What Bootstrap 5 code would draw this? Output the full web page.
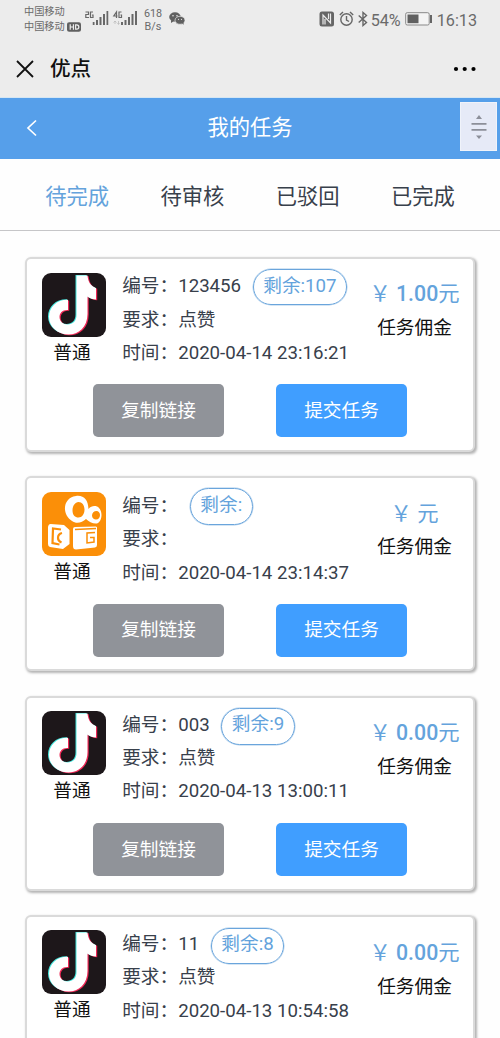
<!DOCTYPE html>
<html lang="zh-CN">
<head>
<meta charset="utf-8">
<meta name="viewport" content="width=device-width, initial-scale=1">
<title>我的任务</title>
<link href="https://cdn.jsdelivr.net/npm/bootstrap@5.3.0/dist/css/bootstrap.min.css" rel="stylesheet">
<style>
body{font-family:Roboto,"Noto Sans CJK SC",sans-serif;font-size:18.67px;line-height:33.3px;background:#fefefe;color:#38404b}
svg{display:block;flex:none}
.phone-top{height:98px;background:#ececec;border-bottom:1px solid #d5e6f3}
.status{height:39px;padding:5px 23px 0 24px;color:#6a6a6a}
.carrier{font-size:10.2px;line-height:14.5px;width:60px}
.speed{font-size:10.8px;line-height:13px;width:24px;padding-top:2px;margin-left:2px;text-align:center}
.pct{font-size:16.2px;line-height:28px}
.app-title{font-size:20.6px;font-weight:500;line-height:30px;color:#111;margin-left:16px}
.blue-bar{height:60.5px;background:#569fea;color:#fff;font-size:21.3px}
.float-btn{right:3px;top:4px;width:37px;height:49px;background:#e6eaf7;border:1px solid #f0f3fa}
.tabs{height:72.5px;padding:4px 19.5px 0;border-bottom:1.5px solid #c6c6c8;font-size:21.3px}
.sky{color:#64a3dc}
.tasks{padding:25.5px 25px 0 25px}
.task{height:195px;margin-bottom:24.6px;border:2px solid #dadada;border-radius:6px;background:#fff;box-shadow:1.5px 1.5px 2.5px #b4b4b4;padding:14px 14.5px 0 15px}
.task:last-child{height:123px;margin-bottom:0;border-bottom:0;border-radius:6px 6px 0 0}
.task-info{height:111.5px}
.lift{margin-top:-1.2px}
.logo-col{width:64px;color:#111}
.kind{line-height:30px;padding-right:4px;margin-top:1px}
.facts{margin-left:16.2px;margin-top:-2.2px;white-space:nowrap}
.facts.raised{margin-top:-3.2px}
.pill{height:36.5px;border:1px solid #6aa5dc;box-shadow:0 0 0 .5px #a9cbea;border-radius:19px;padding:0 9.5px;line-height:33.2px;margin:-1.700px 0 -1.500px 11.700px}
.raised .pill{margin-top:-.5px;margin-bottom:-2.700px;line-height:31.500px}
.fee{width:100px;margin-right:-6px;color:#111}
.fee-sum{font-size:21.3px;line-height:34px;margin-top:4.500px;margin-bottom:.9px}
.btn-task{width:131px;height:53px;border:0;border-radius:5px;color:#fff!important;font-size:18.67px;padding:0;line-height:50px}
.btn-copy{background:#909399!important}.btn-send{background:#409eff!important}
.actions{gap:52px;padding-left:51px}
</style>
</head>
<body>
<svg width="0" height="0" class="position-absolute" aria-hidden="true">
<defs>
<path id="note" d="M34.5 2.5H45.5C46 9 49 13.5 54 15V26.500C51 26.500 48 25.500 45.500 23.500V41C45.500 54 36.500 61.500 26.500 61.500C15.500 61.500 7 53.500 7 44C7 34 15 26.500 26 26.800V37C20.500 36.500 17.500 40 17.500 44C17.500 48.500 21 51.500 25.500 51.500C31 51.500 34.500 48 34.500 42Z"/>
<symbol id="douyin" viewBox="0 0 64 64"><rect width="64" height="64" rx="9" fill="#1d171a"/><use href="#note" x="1.200" y=".8" fill="#ee2655"/><use href="#note" x="-1" y="-.5" fill="#43e6dd"/><use href="#note" fill="#fff"/></symbol>
<symbol id="kuai" viewBox="0 0 64 64"><rect width="64" height="64" rx="9" fill="#fb8f08"/>
<path fill="#fff" fill-rule="evenodd" d="M34 4C42 3 46 8 46.500 17C49 14 52 13.500 55 14.500C61 17 61 29 55 31.500C51 32 47 30 44 27C40 31 34 32 30 29C20 23 20 6 34 4ZM36.500 10C33 10 30.500 14 30.500 18.500C30.500 23 33 25.500 36.500 25.500C40 25.500 42.500 22 42.500 17.500C42.500 13 40 10 36.500 10ZM54.500 19C52 19 50 21 50 23.500C50 26 52 27.500 54 27.500C56.500 27.500 58 25.500 58 23C58 21 56.500 19 54.500 19Z"/>
<path fill="#fff" d="M8.500 32L22 33L27.500 38V52L21 57L8 55Q6 54.500 6 52V35Q6.500 32 8.500 32ZM31 37Q31 35 33 35L54 34.500Q55.500 34.500 55 37V53Q55 55 53 55.500L34 57.500Q31 57.500 31 54Z"/>
<path d="M19 37.500L11 36.500L10.500 51L17.500 52.500M20 41Q16 42 16 46Q16 49 19.500 50.500" fill="none" stroke="#fb8f08" stroke-width="2.200"/><path d="M33 37.500L54 36.500M53 40.500L45 41V51L52 50V45.500H48" fill="none" stroke="#fb8f08" stroke-width="1.500"/></symbol>
<symbol id="bars" viewBox="0 0 16 16"><path d="M0 15V12H2V15ZM3.500 15V10H5.500V15ZM7 15V7H9V15ZM10.500 15V4H12.500V15ZM14 15V1H16V15Z" fill="#686868"/></symbol>
</defs></svg>

<header class="phone-top">
<div class="status d-flex justify-content-between">
 <div class="d-flex">
  <div class="carrier text-nowrap"><div>中国移动</div><div class="d-flex align-items-center">中国移动<svg style="margin-left:2px" width="14" height="10" viewBox="0 0 13 9"><rect width="13" height="9" rx="2" fill="#606060"/><path d="M3 2V7M3 4.500H6M6 2V7M8 2.500V6.500H9Q11 6.500 11 4.500Q11 2.500 9 2.500Z" fill="none" stroke="#eee" stroke-width="1.100"/></svg></div></div>
  <svg width="55" height="28" viewBox="0 0 55 28"><g fill="none" stroke="#686868" stroke-width="1.200"><path d="M1.500 7H4.500V9.500H1.800V12.500H5M9 7H6.500V12.500H9V10H8M32.500 13V7L29.800 11H33.500M37.500 7H35V12.500H37.500V10H36.500"/></g><path d="M31 19V16M29.500 17.500L31 16L32.500 17.500M34.500 16V19M33.500 18L34.500 19.500L35.500 18" fill="none" stroke="#bbb" stroke-width=".8"/><use href="#bars" x="8.500" y="5" width="16" height="16"/><use href="#bars" x="37" y="5" width="16" height="16"/></svg>
  <div class="speed">618<br>B/s</div>
  <svg style="margin-top:7px;margin-left:4px" width="16" height="14" viewBox="0 0 16 14"><ellipse cx="6" cy="5" rx="5.800" ry="4.700" fill="#606060"/><path d="M2 8V11L5 9Z" fill="#606060"/><ellipse cx="11" cy="8.300" rx="5" ry="4" fill="#606060" stroke="#ececec" stroke-width=".7"/><path d="M13 11L14.500 13V10Z" fill="#606060"/><g fill="#e8e8e8"><circle cx="4" cy="3.800" r=".8"/><circle cx="8" cy="3.800" r=".8"/><circle cx="9.500" cy="7.300" r=".6"/><circle cx="12.500" cy="7.300" r=".6"/></g></svg>
 </div>
 <div class="d-flex align-items-center pct" style="height:28px">
  <svg width="16" height="16" viewBox="0 0 16 16"><rect x=".5" y=".5" width="14.500" height="15" rx="2.500" fill="#666"/><path d="M4 13.500V4L11.500 12V2.500M6 13.500V8M9.500 8V2.500" fill="none" stroke="#ececec" stroke-width="1.200"/></svg>
  <svg class="ms-1" width="15" height="16" viewBox="0 0 15 16" fill="none" stroke="#666" stroke-width="1.400"><circle cx="7.500" cy="8.500" r="5.700"/><path d="M7.500 5V9L10 10.500M.8 4L4 1M14.200 4L11 1"/></svg>
  <svg style="margin-left:4px" width="10" height="16" viewBox="0 0 10 16" fill="none" stroke="#666" stroke-width="1.400"><path d="M.7 4.500L8.500 11.500L5 14.500V1.500L8.500 4.500L.7 11.500"/></svg>
  <span class="pt-1" style="margin-left:3px">54%</span>
  <svg style="margin-left:4px" width="28" height="14" viewBox="0 0 28 14"><rect x=".7" y=".7" width="23.500" height="12.300" rx="1.500" fill="#f4f4f4" stroke="#888" stroke-width="1"/><path d="M2.500 2.500H13.500V11.200H2.500Z" fill="#606060"/><path d="M25 3H27V11H25Z" fill="#666"/></svg>
  <span class="pt-1" style="margin-left:4px">16:13</span>
 </div>
</div>
<div class="d-flex align-items-center" style="padding:14.5px 23px 0 16px">
 <svg width="18" height="18" viewBox="0 0 18 18"><path d="M1 1L17 17M17 1L1 17" stroke="#111" stroke-width="1.800"/></svg>
 <div class="app-title">优点</div>
 <svg class="ms-auto" width="24" height="6" viewBox="0 0 24 6"><circle cx="3" cy="3" r="2.100"/><circle cx="11.700" cy="3" r="2.100"/><circle cx="20.500" cy="3" r="2.100"/></svg>
</div>
</header>

<nav class="blue-bar position-relative d-flex align-items-center justify-content-center">
 <svg class="position-absolute" style="left:26px;top:21px" width="12" height="18" viewBox="0 0 12 18"><path d="M10 1.500L2 9L10 16.500" fill="none" stroke="#fff" stroke-width="1.700"/></svg>
 <span style="padding-bottom:2px">我的任务</span>
 <div class="float-btn position-absolute d-flex align-items-center justify-content-center"><svg width="16" height="26" viewBox="0 0 16 26" fill="#8c8f99"><path d="M8 1L11 5H5ZM.5 9H15.500V10.800H.5ZM.5 15H15.500V16.800H.5ZM5 21.500H11L8 25Z"/></svg></div>
</nav>
<div class="tabs row g-0 align-items-center text-center">
 <div class="col sky">待完成</div><div class="col">待审核</div><div class="col">已驳回</div><div class="col">已完成</div>
</div>

<main class="tasks">
<section class="task">
 <div class="task-info d-flex">
  <div class="logo-col text-center"><svg width="64" height="64"><use href="#douyin"/></svg><div class="kind">普通</div></div>
  <div class="facts"><div class="d-flex">编号：123456<span class="pill sky">剩余:107</span></div><div>要求：点赞</div><div>时间：2020-04-14 23:16:21</div></div>
  <div class="fee ms-auto text-center"><div class="fee-sum sky">￥ <span class="fw-medium">1.00</span>元</div><div>任务佣金</div></div>
 </div>
 <div class="actions d-flex"><button class="btn btn-task btn-copy">复制链接</button><button class="btn btn-task btn-send">提交任务</button></div>
</section>
<section class="task">
 <div class="task-info d-flex">
  <div class="logo-col text-center"><svg width="64" height="64"><use href="#kuai"/></svg><div class="kind">普通</div></div>
  <div class="facts"><div class="d-flex">编号：<span class="pill sky">剩余:</span></div><div>要求：</div><div>时间：2020-04-14 23:14:37</div></div>
  <div class="fee ms-auto text-center"><div class="fee-sum sky">￥ 元</div><div>任务佣金</div></div>
 </div>
 <div class="actions d-flex"><button class="btn btn-task btn-copy">复制链接</button><button class="btn btn-task btn-send">提交任务</button></div>
</section>
<section class="task">
 <div class="task-info d-flex">
  <div class="logo-col text-center lift"><svg width="64" height="64"><use href="#douyin"/></svg><div class="kind">普通</div></div>
  <div class="facts raised"><div class="d-flex">编号：003<span class="pill sky">剩余:9</span></div><div>要求：点赞</div><div>时间：2020-04-13 13:00:11</div></div>
  <div class="fee ms-auto text-center"><div class="fee-sum sky">￥ <span class="fw-medium">0.00</span>元</div><div>任务佣金</div></div>
 </div>
 <div class="actions d-flex"><button class="btn btn-task btn-copy">复制链接</button><button class="btn btn-task btn-send">提交任务</button></div>
</section>
<section class="task">
 <div class="task-info d-flex" style="height:106px">
  <div class="logo-col text-center lift"><svg width="64" height="64"><use href="#douyin"/></svg><div class="kind">普通</div></div>
  <div class="facts raised"><div class="d-flex">编号：11<span class="pill sky">剩余:8</span></div><div>要求：点赞</div><div>时间：2020-04-13 10:54:58</div></div>
  <div class="fee ms-auto text-center"><div class="fee-sum sky">￥ <span class="fw-medium">0.00</span>元</div><div>任务佣金</div></div>
 </div>
</section>
</main>
<script src="https://cdn.jsdelivr.net/npm/bootstrap@5.3.0/dist/js/bootstrap.bundle.min.js"></script>
</body>
</html>
